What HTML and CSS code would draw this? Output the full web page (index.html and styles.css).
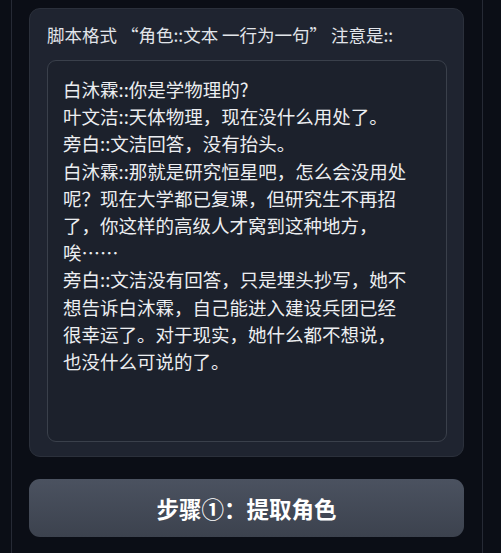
FILE: index.html
```html
<!DOCTYPE html>
<html lang="zh-CN">
<head>
  <meta charset="UTF-8" />
  <meta name="viewport" content="width=device-width, initial-scale=1.0"/>
  <title>脚本</title>
  <link rel="stylesheet" href="styles.css">
</head>
<body>

  <div class="panel">
    <div class="card">
      <label class="field-label" for="script">脚本格式 “角色::文本 一行为一句” 注意是::</label>
      <textarea id="script" class="script-box" spellcheck="false">白沐霖::你是学物理的?
叶文洁::天体物理，现在没什么用处了。
旁白::文洁回答，没有抬头。
白沐霖::那就是研究恒星吧，怎么会没用处
呢？现在大学都已复课，但研究生不再招
了，你这样的高级人才窝到这种地方，
唉……
旁白::文洁没有回答，只是埋头抄写，她不
想告诉白沐霖，自己能进入建设兵团已经
很幸运了。对于现实，她什么都不想说，
也没什么可说的了。</textarea>
    </div>

    <button class="step-btn">步骤①：提取角色</button>
  </div>

</body>
</html>
```

FILE: styles.css
```css
body {
  margin: 0;
  background: #0b0e16;
  font-family: "Noto Sans CJK SC", "Noto Sans", sans-serif;
  color: #e4e7ec;
}

.panel {
  margin-left: 11px;
  width: 472px;
  min-height: 553px;
  border-left: 1px solid #262a35;
  border-right: 1px solid #262a35;
  padding: 8px 0 0 17px;
  box-sizing: border-box;
}

.card {
  width: 435px;
  box-sizing: border-box;
  background: #1f2430;
  border: 1px solid #2b303b;
  border-radius: 11px;
  padding: 12px 16px 14px 17px;
}

.field-label {
  display: block;
  font-size: 17.5px;
  line-height: 28px;
  color: #e2e5ea;
  margin-bottom: 11px;
}

.script-box {
  display: block;
  width: 400px;
  height: 382px;
  box-sizing: border-box;
  background: #1c212c;
  border: 1px solid #3a404b;
  border-radius: 9px;
  padding: 15px 8px 15px 15px;
  font-family: "Noto Sans CJK SC", "Noto Sans", sans-serif;
  font-size: 18.5px;
  line-height: 27.2px;
  color: #eceef1;
  outline: none;
  resize: none;
}

.step-btn {
  display: block;
  margin-top: 22px;
  width: 435px;
  height: 58px;
  border: none;
  border-radius: 11px;
  background: linear-gradient(180deg, #4b5260 0%, #3c424e 100%);
  color: #ffffff;
  font-family: "Noto Sans CJK SC", "Noto Sans", sans-serif;
  font-size: 22.5px;
  font-weight: bold;
  cursor: pointer;
}
```
